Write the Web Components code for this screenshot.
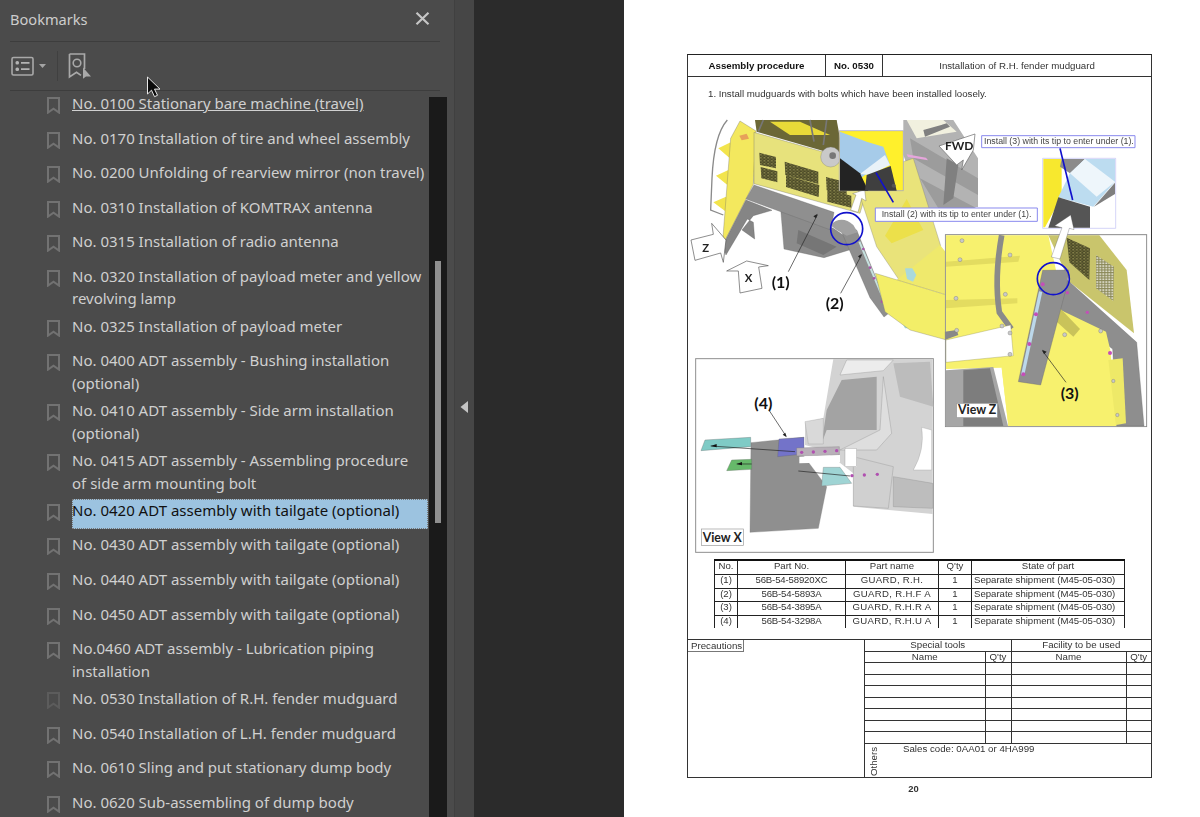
<!DOCTYPE html>
<html><head><meta charset="utf-8"><title>Bookmarks</title>
<style>html,body{margin:0;height:100%;background:#2b2b2b;overflow:hidden}</style></head>
<body>
<app-shell>
  <bookmarks-panel slot="side">
    <bookmark-item underlined>No. 0100 Stationary bare machine (travel)</bookmark-item>
    <bookmark-item>No. 0170 Installation of tire and wheel assembly</bookmark-item>
    <bookmark-item>No. 0200 Unfolding of rearview mirror (non travel)</bookmark-item>
    <bookmark-item>No. 0310 Installation of KOMTRAX antenna</bookmark-item>
    <bookmark-item>No. 0315 Installation of radio antenna</bookmark-item>
    <bookmark-item>No. 0320 Installation of payload meter and yellow revolving lamp</bookmark-item>
    <bookmark-item>No. 0325 Installation of payload meter</bookmark-item>
    <bookmark-item>No. 0400 ADT assembly - Bushing installation (optional)</bookmark-item>
    <bookmark-item>No. 0410 ADT assembly - Side arm installation (optional)</bookmark-item>
    <bookmark-item>No. 0415 ADT assembly - Assembling procedure<br>of side arm mounting bolt</bookmark-item>
    <bookmark-item selected>No. 0420 ADT assembly with tailgate (optional)</bookmark-item>
    <bookmark-item>No. 0430 ADT assembly with tailgate (optional)</bookmark-item>
    <bookmark-item>No. 0440 ADT assembly with tailgate (optional)</bookmark-item>
    <bookmark-item>No. 0450 ADT assembly with tailgate (optional)</bookmark-item>
    <bookmark-item>No.0460 ADT assembly - Lubrication piping installation</bookmark-item>
    <bookmark-item dim>No. 0530 Installation of R.H. fender mudguard</bookmark-item>
    <bookmark-item>No. 0540 Installation of L.H. fender mudguard</bookmark-item>
    <bookmark-item>No. 0610 Sling and put stationary dump body</bookmark-item>
    <bookmark-item>No. 0620 Sub-assembling of dump body</bookmark-item>
  </bookmarks-panel>
  <nav-splitter slot="split"></nav-splitter>
  <doc-page slot="doc"></doc-page>
</app-shell>
<script>
function def(name, html, init){
  customElements.define(name, class extends HTMLElement{
    constructor(){super();this.attachShadow({mode:'open'}).innerHTML=html;}
    connectedCallback(){init&&init.call(this);}
  });
}
def('app-shell',`<style>
:host{display:flex;width:1200px;height:817px;overflow:hidden;background:#2b2b2b}
.gap{width:150px;flex:none}
</style><slot name="side"></slot><slot name="split"></slot><div class="gap"></div><slot name="doc"></slot>`);

def('bookmarks-panel',`<style>
:host{display:flex;flex-direction:column;width:454px;flex:none;height:817px;background:#4b4b4b;color:#d2d2d2;position:relative;overflow:hidden;font-family:"Noto Sans","Open Sans",sans-serif}
.title{height:41px;display:flex;align-items:center;justify-content:space-between;padding:0 24px 4px 10px;box-sizing:border-box;font-size:14.6px;color:#cdcdcd;flex:none}
.title svg{display:block}
.bar{margin:0 14px 0 10px;height:48px;border-top:1px solid #3d3d3d;border-bottom:1px solid #3d3d3d;display:flex;align-items:center;flex:none;box-sizing:content-box}
.bar .sep{width:1px;height:30px;background:#404040;margin:0 10px 0 9px}
.body{flex:1;display:flex;min-height:0}
.items{width:429px;flex:none;display:flex;flex-direction:column;overflow:hidden;padding-top:1px;box-sizing:border-box}
.track{width:18px;margin-top:6px;background:#1a1a1a;flex:none;display:flex;justify-content:center}
.thumb{width:6px;height:262px;margin-top:164px;background:#8f8f8f}
.cursor{position:absolute;left:146px;top:76px}
</style>
<div class="title"><span>Bookmarks</span>
<svg width="15" height="13" viewBox="0 0 15 13"><path d="M1.5 .8 13.5 12.2M13.5 .8 1.5 12.2" stroke="#c6c6c6" stroke-width="2.2" fill="none"/></svg></div>
<div class="bar">
<svg width="37" height="22" viewBox="0 0 37 22" style="margin-left:1px"><rect x="1" y="2.5" width="21" height="17.5" rx="1.5" fill="none" stroke="#a9a9a9" stroke-width="1.6"/><rect x="4.5" y="6" width="3.5" height="3.5" rx="1.5" fill="#b4b4b4"/><rect x="4.5" y="12.5" width="3.5" height="3.5" rx="1.5" fill="#b4b4b4"/><path d="M10 7.8h8.5M10 14.2h8.5" stroke="#b4b4b4" stroke-width="1.7"/><path d="M28 9h7l-3.5 4z" fill="#a4a4a4"/></svg>
<div class="sep"></div>
<svg width="24" height="26" viewBox="0 0 24 26"><path d="M1.5 1h15v15M1.5 1v23l7-4.8 4.5 3.2" fill="none" stroke="#a9a9a9" stroke-width="1.7"/><circle cx="9" cy="10" r="3.8" fill="none" stroke="#a9a9a9" stroke-width="1.6"/><path d="M15 14.5l8 9h-5l-3 2.3z" fill="#a9a9a9"/></svg>
</div>
<div class="body"><div class="items"><slot></slot></div><div class="track"><div class="thumb"></div></div></div>
<svg class="cursor" width="16" height="23" viewBox="0 0 16 23"><path d="M1.5 1v17l4-3.8 3 6.5 3-1.4-3-6.2h5.5z" fill="#0b0b0b" stroke="#e8e8e8" stroke-width="1"/></svg>`);

def('bookmark-item',`<style>
:host{display:flex;flex:none;min-height:34.55px;box-sizing:border-box;padding:0 1px 4.5px 47px;gap:12px;font-size:15px;line-height:22.7px;color:#d0d0d0}
svg{flex:none;margin-top:5px;display:block}
.t{flex:1;min-width:0;display:block;box-sizing:border-box}
:host([underlined]) .t span{text-decoration:underline}
:host([selected]) .t{background:#9cc3e0;color:#111;min-height:30px;outline:1px dotted #777;outline-offset:-1px}
:host([dim]) svg{opacity:.45}
</style><svg width="13" height="17" viewBox="0 0 13 17"><path d="M1 1h11v14.6l-5.5-3.9-5.5 3.9z" fill="none" stroke="#727272" stroke-width="2"/></svg><div class="t"><span><slot></slot></span></div>`);

def('nav-splitter',`<style>
:host{display:flex;width:20px;flex:none;height:817px;background:#464646;align-items:center;justify-content:center;border-left:1px solid #404040;box-sizing:border-box}
svg{display:block;margin-top:-3px;margin-right:1px}
</style><svg width="8" height="14" viewBox="0 0 8 14"><path d="M8 1v12L.5 7z" fill="#c4c4c4"/></svg>`);

def('doc-page',`<style>
:host{display:block;width:576px;flex:none;height:817px;background:#fff;box-sizing:border-box;padding:54px 48px 0 63px;font-family:"Liberation Sans",Arial,sans-serif;font-size:9.7px;color:#222}
.wrap{filter:blur(.4px)}
.frame{width:465px;height:724px;box-sizing:border-box;border:1px solid #333;border-top:1.5px solid #222;display:flex;flex-direction:column}
.head{display:grid;grid-template-columns:138px 57px 1fr;height:21px;border-bottom:1px solid #333;flex:none}
.head div{display:flex;align-items:center;justify-content:center;border-right:1px solid #333}
.head div:last-child{border-right:0;color:#333}
.head b{color:#111}
.step{height:38px;flex:none;padding:10.5px 0 0 20px;box-sizing:border-box;line-height:11px;color:#333}
fig-drawing{flex:none}
.pt{flex:none;padding:4px 0 0 26px;height:84px;box-sizing:border-box}
.num{width:453px;text-align:center;margin-top:5px;font-weight:bold;color:#333;font-size:9.4px}
</style><div class="wrap"><div class="frame">
<div class="head"><div><b>Assembly procedure</b></div><div><b>No. 0530</b></div><div>Installation of R.H. fender mudguard</div></div>
<div class="step">1. Install mudguards with bolts which have been installed loosely.</div>
<fig-drawing></fig-drawing>
<div class="pt"><parts-table></parts-table></div>
<tools-table></tools-table>
</div><div class="num">20</div></div>`);

def('parts-table',`<style>
:host{display:block;width:410px}
table{border-collapse:collapse;table-layout:fixed;width:410px;font-size:9.6px;color:#333}
td{border:1px solid #222;height:12.6px;padding:0;text-align:center;line-height:10px;vertical-align:top;white-space:nowrap;overflow:hidden}
tr:first-child td{border-top:2px solid #111;height:13px}
tr:last-child td{border-bottom:0}
td.l{text-align:left;padding-left:2px}
td.n{letter-spacing:-.15px}
td.g{letter-spacing:.3px}
</style><table><colgroup><col style="width:23px"><col style="width:108px"><col style="width:93px"><col style="width:33px"><col style="width:153px"></colgroup>
<tr><td>No.</td><td>Part No.</td><td>Part name</td><td>Q'ty</td><td>State of part</td></tr>
<tr><td>(1)</td><td class="n">56B-54-58920XC</td><td class="g">GUARD, R.H.</td><td>1</td><td class="l">Separate shipment (M45-05-030)</td></tr>
<tr><td>(2)</td><td class="n">56B-54-5893A</td><td class="g">GUARD, R.H.F A</td><td>1</td><td class="l">Separate shipment (M45-05-030)</td></tr>
<tr><td>(3)</td><td class="n">56B-54-3895A</td><td class="g">GUARD, R.H.R A</td><td>1</td><td class="l">Separate shipment (M45-05-030)</td></tr>
<tr><td>(4)</td><td class="n">56B-54-3298A</td><td class="g">GUARD, R.H.U A</td><td>1</td><td class="l">Separate shipment (M45-05-030)</td></tr>
</table>`);

def('tools-table',`<style>
:host{display:grid;grid-template-columns:177px 1fr;flex:1;border-top:1px solid #333;min-height:0;color:#333;font-size:9.7px}
.pre{border-right:1px solid #333}
.pre span{display:inline-block;border:1px solid #777;border-width:0 1px 1px 0;padding:0 1px 0 3px;line-height:11px}
.r{display:flex;flex-direction:column}
table{border-collapse:collapse;table-layout:fixed;width:286px}
td{border-bottom:1px solid #333;border-right:1px solid #333;height:10.55px;padding:0;text-align:center;line-height:10px}
td:last-child{border-right:0}
.oth{flex:1;display:flex;min-height:0;overflow:hidden}
.oth i{font-style:normal;writing-mode:vertical-rl;transform:rotate(180deg);width:10px;margin-left:4px;line-height:10px;text-align:left;padding-top:1px;box-sizing:border-box}
.oth span{margin-left:24px;line-height:10px}
</style><div class="pre"><span>Precautions</span></div><div class="r"><table><colgroup><col style="width:120px"><col style="width:26px"><col style="width:115px"><col style="width:25px"></colgroup>
<tr><td colspan="2">Special tools</td><td colspan="2">Facility to be used</td></tr>
<tr><td>Name</td><td>Q'ty</td><td>Name</td><td>Q'ty</td></tr>
<tr><td></td><td></td><td></td><td></td></tr><tr><td></td><td></td><td></td><td></td></tr><tr><td></td><td></td><td></td><td></td></tr><tr><td></td><td></td><td></td><td></td></tr><tr><td></td><td></td><td></td><td></td></tr><tr><td></td><td></td><td></td><td></td></tr><tr><td></td><td></td><td></td><td></td></tr>
</table><div class="oth"><i>Others</i><span>Sales code: 0AA01 or 4HA999</span></div></div>`);

const L='font-family="Liberation Sans,Arial,sans-serif"';
const B='font-family="Lato,Liberation Sans,sans-serif" font-weight="700"';
def('fig-drawing',`<style>
:host{display:block;width:463px;height:440px}
svg{display:block}
</style>
<svg width="463" height="440" viewBox="688 115 463 440" xmlns="http://www.w3.org/2000/svg">
<defs>
<pattern id="gr" width="11" height="9" patternUnits="userSpaceOnUse"><rect width="11" height="9" fill="#4c4a28"/><rect x="1" y="1" width="5" height="3" fill="#a5a25c"/><rect x="6" y="5" width="4" height="3" fill="#7f7d42"/></pattern>
<pattern id="gw" width="9" height="8" patternUnits="userSpaceOnUse"><rect width="9" height="8" fill="#8a8858"/><rect x="1" y="1" width="6" height="4" fill="#ecece0"/></pattern>
</defs>
<!-- main isometric view, coordinates from a 3x sketch -->
<g transform="translate(690 115) scale(.33333)">
<path d="M640 15H790L864 130V276H770L700 285 640 120z" fill="#b3b3b3"/>
<path d="M660 70 864 190V240L670 130zM690 190 860 280H745z" fill="#9c9c9c"/>
<path d="M650 15H760L800 50 680 70z" fill="#f1f0df"/>
<path d="M700 45 770 25 780 35 705 65zM770 130 805 150 790 250 760 270z" fill="#808080"/>
<path d="M112 15Q72 60 66 190L62 285 100 300" fill="none" stroke="#8a8a8a" stroke-width="4"/>
<path d="M85 100 122 82V132zM78 182 115 165V212zM70 262 108 245V290z" fill="#f2e44c"/>
<path d="M195 15H440L460 125 200 50z" fill="#6b6736"/>
<path d="M240 20H330L420 60 300 60z" fill="#e8da38"/>
<path d="M220 15 205 50M360 15 372 80M410 15 400 90" stroke="#777" stroke-width="5" fill="none"/>
<path d="M122 70 150 18 198 48 190 208 165 258 97 392z" fill="#f3e85e" stroke="#666" stroke-width="1"/>
<path d="M148 62l22-6 7 15-22 5z" fill="#e7a05a"/>
<path d="M192 52 450 125 530 228 510 295 192 206z" fill="#e7e27c" stroke="#666" stroke-width="1"/>
<circle cx="422" cy="126" r="30" fill="#c9c9c9" stroke="#777"/><circle cx="428" cy="122" r="10" fill="#777"/>
<path d="M208 113 258 126V160L210 150zM212 156 262 169V202L214 190zM284 140 385 170V207L286 180zM288 181 388 210 386 246 288 216zM408 186 470 202V242L410 226zM412 224 484 242V278L412 260z" fill="url(#gr)"/>
<path d="M272 282 430 340 510 395 402 428 282 402z" fill="#8b8b8b" stroke="#666"/>
<path d="M325 345 440 395 400 420 320 385z" fill="#767676"/>
<path d="M192 210 432 292 422 345 168 252z" fill="#8f8f8f" stroke="#666"/>
<path d="M168 255 98 392 108 420 172 312 190 322 194 372 156 345 190 302 246 286z" fill="#858585" stroke="#555"/>
<path d="M505 228 640 140 670 130 752 392 628 496 560 395z" fill="#e9e37a" stroke="#777"/>
<path d="M585 362 650 252 700 345 605 385z" fill="#ece04a"/>
<path d="M448 335 500 345 522 400 600 592 582 606 540 548z" fill="#8e8e8e" stroke="#666"/>
<path d="M508 380 596 590" stroke="#c6e1df" stroke-width="6"/>
<path d="M420 330Q455 298 490 330L503 352 470 362 440 345z" fill="#a1a1a1"/>
<circle cx="520" cy="402" r="4" fill="#aa55aa"/><circle cx="540" cy="458" r="4" fill="#aa55aa"/><circle cx="552" cy="490" r="4" fill="#aa55aa"/><circle cx="576" cy="560" r="4" fill="#aa55aa"/>
<path d="M650 118l58 10 6 8-60-10z" fill="#e6a6dc"/>
<path d="M635 620h22l14 20h-26z" fill="#9ed4d4"/>
<path d="M482 285 498 240 488 236 524 224 528 258 515 250 504 292z" fill="#fff" stroke="#555"/>
<circle cx="470" cy="341" r="48" fill="none" stroke="#1212cc" stroke-width="5"/>
<path d="M295 470 382 300M452 535 515 420" stroke="#222" stroke-width="2" fill="none"/>
<path d="M378 310l5-14-13 8zM510 430l6-14-12 8z" fill="#222"/>
<path d="M3 375 70 358 65 325 108 375 100 442 92 414 15 436z" fill="#fff" stroke="#555" stroke-width="2"/>
<path d="M110 468 170 438 235 452 206 456 216 520 150 534 145 468z" fill="#fff" stroke="#555" stroke-width="2"/>
<text x="37" y="410" font-size="34" fill="#222" ${B}>Z</text>
<text x="164" y="502" font-size="34" fill="#222" ${B}>X</text>
<text x="245" y="520" font-size="48" fill="#111" ${B}>(1)</text>
<text x="407" y="581" font-size="48" fill="#111" ${B}>(2)</text>
</g>
<!-- inset details and labels -->
<g transform="translate(680 40) scale(.33333)">
<path d="M650 720 780 615 800 640V765z" fill="#efe96c"/>
<path d="M586 700 800 765V900L690 870 615 815z" fill="#f3ee68" stroke="#777"/>
<path d="M675 685h22l12 20-10 20-18-8z" fill="#a9d9dc"/>
<path d="M478 272H670V452H478z" fill="#fff02c" stroke="#9a9ae0" stroke-width="2"/>
<path d="M480 275 560 305 610 320 630 375 555 405 535 420 480 375z" fill="#a6cbe9"/>
<path d="M540 402 615 345 630 375 570 405z" fill="#e9f2f8"/>
<path d="M480 355 540 400 565 452H480z" fill="#232323"/>
<path d="M560 405 632 378 650 452H555z" fill="#3f3f3f"/>
<circle cx="641" cy="437" r="6" fill="#555"/>
<path d="M588 398 640 487" stroke="#1111cc" stroke-width="5"/>
<path d="M777 318 885 282 880 330 845 390 850 360 830 375z" fill="#fff" stroke="#666" stroke-width="2"/>
<text x="795" y="331" font-size="36" fill="#222" ${B}>FWD</text>
<path d="M586 504H1072V544H586z" fill="#fff" stroke="#8a8aee" stroke-width="3"/>
<text x="605" y="532" font-size="26.4" fill="#444" ${L}>Install (2) with its tip to enter under (1).</text>
<path d="M905 287H1365V323H905z" fill="#fff" stroke="#8a8aee" stroke-width="3"/>
<text x="912" y="311" font-size="26.4" fill="#444" ${L}>Install (3) with its tip to enter under (1).</text>
<path d="M1088 355H1307V565H1088z" fill="#fff" stroke="#c0c0f4" stroke-width="2"/>
<path d="M1090 357H1145V470L1095 562H1090z" fill="#f7e82e"/>
<path d="M1145 357H1215L1170 400 1140 380z" fill="#8b8b8b"/>
<path d="M1215 357H1305V425L1240 500 1135 472 1170 400z" fill="#bcdcf0"/>
<path d="M1170 400 1215 357 1305 425 1250 470z" fill="#eef6fb"/>
<path d="M1242 500 1305 428V462L1242 500z" fill="#7f7f7f"/>
<path d="M1135 472 1230 500V563H1105z" fill="#555"/>
<path d="M1140 325 1178 480" stroke="#1111cc" stroke-width="5"/>
</g>
<!-- view Z -->
<g transform="translate(940 225) scale(.33333)">
<rect x="16" y="29" width="604" height="576" fill="#fff" stroke="#8a8a8a" stroke-width="3"/>
<path d="M18 31H325L372 245 496 318 510 380 530 603H205L185 428 18 432z" fill="#f7f16e"/>
<path d="M325 31H478L560 135 582 325 390 172z" fill="#c9c56c"/>
<path d="M380 38 450 70 448 165 388 112z" fill="url(#gr)"/>
<path d="M468 90 522 125 520 228 468 190z" fill="url(#gw)"/>
<path d="M382 165 590 352 612 603H530L518 372 360 252z" fill="#8e8e8e" stroke="#666"/>
<path d="M362 255 498 320 512 380 528 603H205L185 428 230 420 240 475 300 480z" fill="#f7f16e"/>
<path d="M360 250 420 312 400 335 350 290z" fill="#c9c35a"/>
<path d="M505 405 548 400 558 595 528 600z" fill="#eee968"/>
<path d="M18 110 240 92 235 110 18 125zM18 225 232 220 232 235 18 250z" fill="#e3dc60"/>
<path d="M185 31Q162 160 178 262L214 312" fill="none" stroke="#8a8a8a" stroke-width="17"/>
<path d="M18 345 212 300 220 392 18 412z" fill="#fff" stroke="#8a8a50"/>
<path d="M18 436 160 426 204 603H18z" fill="#a6a6a6"/>
<path d="M70 436 150 430 190 603H70z" fill="#7d7d7d"/>
<path d="M14 320 50 315 55 330 14 345z" fill="#888"/>
<path d="M308 136 386 135 380 185 302 480 235 470z" fill="#8f8f8f" stroke="#666"/>
<path d="M302 200 248 450" stroke="#bcd8ea" stroke-width="10"/>
<path d="M360 102 334 96 366 8 344 2 392 -30 402 14 388 10z" fill="#fff" stroke="#555"/>
<circle cx="340" cy="161" r="48" fill="none" stroke="#1212cc" stroke-width="5"/>
<g fill="#c44fb8"><circle cx="308" cy="178" r="6"/><circle cx="288" cy="268" r="6"/><circle cx="268" cy="357" r="6"/><circle cx="250" cy="448" r="6"/><circle cx="382" cy="203" r="5"/><circle cx="442" cy="262" r="5"/><circle cx="510" cy="384" r="6"/></g>
<g fill="#c9c9c9" stroke="#666"><circle cx="66" cy="47" r="6"/><circle cx="60" cy="104" r="6"/><circle cx="48" cy="220" r="6"/><circle cx="50" cy="316" r="6"/><circle cx="210" cy="90" r="6"/><circle cx="196" cy="208" r="6"/><circle cx="186" cy="303" r="6"/><circle cx="210" cy="324" r="6"/><circle cx="210" cy="388" r="6"/><circle cx="374" cy="329" r="6"/><circle cx="482" cy="318" r="6"/><circle cx="520" cy="468" r="5"/><circle cx="532" cy="570" r="5"/></g>
<path d="M378 472 308 378" stroke="#222" stroke-width="2"/><path d="M306 374l14 6-8 8z" fill="#222"/>
<text x="362" y="522" font-size="48" fill="#111" ${B}>(3)</text>
<rect x="50" y="535" width="122" height="43" fill="#fff" stroke="#999" stroke-width="2"/>
<text x="54" y="568" font-size="37" fill="#222" ${B}>View Z</text>
</g>
<!-- view X -->
<g transform="translate(680 350) scale(.33333)">
<rect x="47" y="26" width="713" height="581" fill="#fff" stroke="#8f8f8f" stroke-width="3"/>
<path d="M460 27H758V492L520 470 520 370 430 300 375 285V218L430 205z" fill="#d3d3d3"/>
<path d="M485 90 590 80 590 240 440 240 425 280 440 180z" fill="#a3a3a3"/>
<path d="M500 30H640L610 62 480 75z" fill="#ececec" stroke="#888"/>
<path d="M375 215 430 205V282L385 282z" fill="#d9d9d9" stroke="#999"/>
<path d="M640 40 660 140 760 170 750 35z" fill="#bcbcbc"/>
<path d="M610 80 635 250 590 300 480 300 600 240z" fill="#dedede" stroke="#888"/>
<path d="M725 232 755 240V360H700Q735 300 725 232z" fill="#fff" stroke="#999"/>
<path d="M640 380 758 400V475L640 470z" fill="#bdbdbd" stroke="#888"/>
<path d="M520 320 640 350 625 475 520 468z" fill="#d0d0d0" stroke="#888"/>
<rect x="495" y="295" width="35" height="55" fill="#fff" stroke="#888"/>
<path d="M213 278 372 262 350 290 440 410 415 535 210 547z" fill="#8f8f8f" stroke="#777"/>
<path d="M297 267 372 262V312L293 320z" fill="#7373c9" stroke="#666"/>
<path d="M75 270 212 262V290L63 302z" fill="#7fcbc6" stroke="#666"/>
<path d="M155 330 215 328V358L140 362z" fill="#66b96a" stroke="#666"/>
<path d="M350 294 478 290V315L350 318z" fill="#b8b0b8" stroke="#777"/>
<path d="M358 320 480 315V337L358 340z" fill="#fff"/>
<path d="M430 352 480 352 515 400 425 408z" fill="#9fd4d4" stroke="#777"/>
<path d="M92 288 345 305M170 342H215M355 363 510 378" stroke="#222" stroke-width="2" fill="none"/>
<path d="M92 288l18-6v10zM170 342l16-6v10z" fill="#111"/>
<g fill="#b050b0"><circle cx="365" cy="307" r="5"/><circle cx="400" cy="306" r="5"/><circle cx="435" cy="304" r="5"/><circle cx="470" cy="302" r="5"/><circle cx="516" cy="377" r="5"/><circle cx="553" cy="375" r="5"/><circle cx="592" cy="373" r="5"/></g>
<path d="M268 182 318 258" stroke="#222" stroke-width="2"/><path d="M320 262l-12-8 8-6z" fill="#222"/>
<text x="223" y="178" font-size="48" fill="#111" ${B}>(4)</text>
<rect x="64" y="537" width="126" height="50" fill="#fff" stroke="#999" stroke-width="2"/>
<text x="68" y="575" font-size="37" fill="#222" ${B}>View X</text>
</g>
</svg>`);
</script>
</body></html>
